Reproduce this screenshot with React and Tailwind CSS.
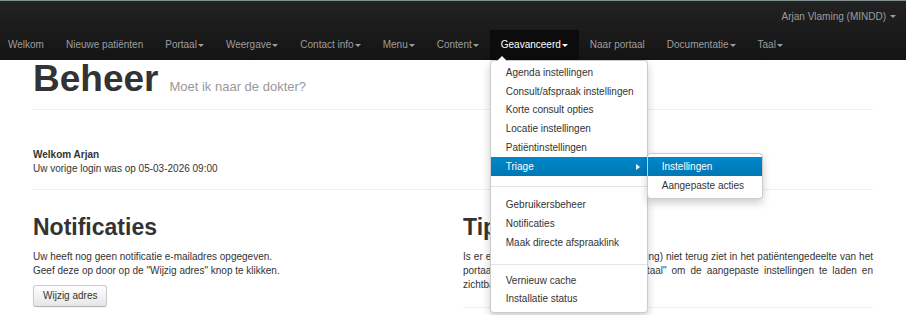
import React from 'react';

const NAV = [
    { label: 'Welkom' },
    { label: 'Nieuwe patiënten' },
    { label: 'Portaal', caret: true },
    { label: 'Weergave', caret: true },
    { label: 'Contact info', caret: true },
    { label: 'Menu', caret: true },
    { label: 'Content', caret: true },
    { label: 'Geavanceerd', caret: true, active: true },
    { label: 'Naar portaal' },
    { label: 'Documentatie', caret: true },
    { label: 'Taal', caret: true },
];

const Caret = ({ color = 'border-t-[#9d9d9d]' }) => (
    <span className={`inline-block ml-[1px] w-0 h-0 border-x-[3px] border-x-transparent border-t-[3px] align-middle ${color}`} />
);

// dropdown content, "divider" entries draw the thin grey rule
const MENU = [
    'Agenda instellingen',
    'Consult/afspraak instellingen',
    'Korte consult opties',
    'Locatie instellingen',
    'Patiëntinstellingen',
    'TRIAGE',
    'divider-a',
    'Gebruikersbeheer',
    'Notificaties',
    'Maak directe afspraaklink',
    'divider-b',
    'Vernieuw cache',
    'Installatie status',
];

const DropdownMenu = () => (
    <div className="absolute left-0 top-full z-20 w-[158px] bg-white border border-black/20 rounded-[4px] shadow-[0_4px_8px_rgba(0,0,0,0.2)] py-[3px]">
        {/* little arrow under the nav item */}
        <span className="absolute -top-[6px] left-[5px] w-0 h-0 border-x-[6px] border-x-transparent border-b-[6px] border-b-black/20" />
        <span className="absolute -top-[5px] left-[6px] w-0 h-0 border-x-[5px] border-x-transparent border-b-[5px] border-b-white" />
        {MENU.map((item) => {
            if (item === 'divider-a') return <div key={item} className="h-px bg-[#e5e5e5] mt-[10px] mb-[9px]" />;
            if (item === 'divider-b') return <div key={item} className="h-px bg-[#e5e5e5] mt-[11px] mb-[7px]" />;
            if (item === 'TRIAGE') {
                return (
                    <div key={item} className="relative">
                        <div className="flex items-center justify-between h-[19px] pl-[15px] pr-[7px] text-white bg-gradient-to-b from-[#0088cc] to-[#0077b3]">
                            <span>Triage</span>
                            <span className="w-0 h-0 border-y-[3px] border-y-transparent border-l-[4px] border-l-white" />
                        </div>
                        <div className="absolute left-[156px] -top-[4px] w-[116px] bg-white border border-black/20 rounded-[4px] shadow-[0_4px_8px_rgba(0,0,0,0.2)] py-[3px]">
                            <div className="h-[19px] leading-[19px] pl-[14px] text-white bg-gradient-to-b from-[#0088cc] to-[#0077b3]">Instellingen</div>
                            <div className="h-[19px] leading-[19px] pl-[14px] text-[#333]">Aangepaste acties</div>
                        </div>
                    </div>
                );
            }
            return (
                <div key={item} className="h-[18.7px] leading-[18.7px] pl-[15px] text-[#333] whitespace-nowrap">{item}</div>
            );
        })}
    </div>
);

const Navbar = () => (
    <div className="relative z-10 h-[60px] bg-gradient-to-b from-[#222] to-[#141414] border-t border-[#7f8f90] text-[10px] text-[#9d9d9d]">
        <div className="h-[29px] flex items-center justify-end pr-[10px] pt-[2px]">
            <span>Arjan Vlaming (MINDD)</span>
            <span className="ml-[3px]"><Caret /></span>
        </div>
        <ul className="flex h-[30px]">
            {NAV.map((n, i) => (
                <li
                    key={n.label}
                    className={`relative flex items-center h-[30px] ${i === 0 ? 'pl-[8px]' : 'pl-[11px]'} pr-[11px] whitespace-nowrap ${n.active ? 'bg-[#0c0c0c] text-white' : ''}`}
                >
                    <span>{n.label}</span>
                    {n.caret && <Caret color={n.active ? 'border-t-white' : 'border-t-[#9d9d9d]'} />}
                    {n.active && <DropdownMenu />}
                </li>
            ))}
        </ul>
    </div>
);

const JLine = ({ children, last }) => (
    <div className={last ? 'text-left' : 'text-justify [text-align-last:justify]'}>{children}</div>
);

export default function App() {
    return (
        <div className="w-[906px] h-[315px] overflow-hidden bg-white font-['Liberation_Sans',Arial,sans-serif] text-[10px] leading-[14px] text-[#333]">
            <Navbar />
            <div className="w-[840px] mx-auto">
                <div className="flex items-baseline border-b border-[#eee] pb-[11px]">
                    <h1 className="text-[37px] leading-[38px] font-bold text-[#333]">Beheer</h1>
                    <small className="ml-[11px] text-[13px] text-[#999]">Moet ik naar de dokter?</small>
                </div>

                <div className="mt-[38px] pb-[13px] border-b border-[#eee]">
                    <div className="font-bold">Welkom Arjan</div>
                    <div>Uw vorige login was op 05-03-2026 09:00</div>
                </div>

                <div className="grid grid-cols-2 gap-[20px] mt-[25px]">
                    <div>
                        <h2 className="text-[23px] leading-[25px] font-bold">Notificaties</h2>
                        <p className="mt-[10px]">
                            Uw heeft nog geen notificatie e-mailadres opgegeven.
                            <br />
                            Geef deze op door op de "Wijzig adres" knop te klikken.
                        </p>
                        <button className="mt-[7px] h-[22px] px-[9px] text-[10px] text-[#333] border border-[#ccc] border-b-[#b3b3b3] rounded-[3px] bg-gradient-to-b from-white to-[#e6e6e6] shadow-[inset_0_1px_0_rgba(255,255,255,0.2),0_1px_2px_rgba(0,0,0,0.05)]">
                            Wijzig adres
                        </button>
                    </div>
                    <div>
                        <h2 className="text-[23px] leading-[25px] font-bold">Tips</h2>
                        <div className="mt-[10px] pb-[15px] border-b border-[#eee]">
                            <JLine>Is er een wijziging die u (na een aanpassing) niet terug ziet in het patiëntengedeelte van het</JLine>
                            <JLine>portaal, klik dan nu eerst op "Naar portaal" om de aangepaste instellingen te laden en</JLine>
                            <JLine last>zichtbaar te maken.</JLine>
                        </div>
                    </div>
                </div>
            </div>
        </div>
    );
}
